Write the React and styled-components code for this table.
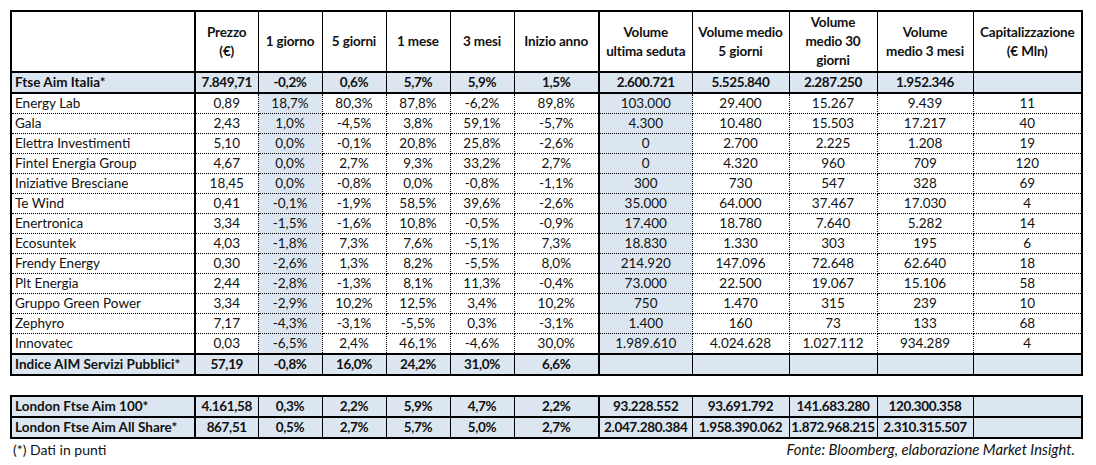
import React from "react";
import styled, { createGlobalStyle, css } from "styled-components";

const GlobalStyle = createGlobalStyle`
  html, body { margin: 0; padding: 0; background: #fff; }
  body { font-family: Lato, "Liberation Sans", sans-serif; color: #111; }
`;

const SHADE = "#dce6f1";
const WIDTHS = [184, 63, 64, 64, 64, 64, 85, 93, 97, 88, 96, 109];
const THICK_AFTER = [0, 6];

const Page = styled.div`
  padding: 10px 0 0 10px;
  width: 1072px;
  display: flex;
  flex-direction: column;
`;

const Table = styled.table`
  border-collapse: collapse;
  table-layout: fixed;
  width: 1072px;
  border: 2px solid #000;
  font-size: 13.5px;
  margin-bottom: ${(p) => p.$gap || 0}px;
`;

const cellBase = css`
  padding: 0 ${(p) => (p.$left ? 3 : 0)}px;
  white-space: nowrap;
  overflow: visible;
  text-align: ${(p) => (p.$left ? "left" : "center")};
  background: ${(p) => (p.$shade ? SHADE : "#fff")};
  border-right: ${(p) => (p.$thickRight ? "2px solid #000" : p.$dotted ? "1px dotted #000" : "1px solid #000")};
`;

const Th = styled.th`
  ${cellBase};
  height: 59px;
  font-weight: 700;
  line-height: 19px;
  letter-spacing: -0.15px;
  border-bottom: 2px solid #000;
  vertical-align: middle;
`;

const Td = styled.td`
  ${cellBase};
  height: 19px;
  line-height: 19px;
  font-weight: ${(p) => (p.$bold ? 700 : 400)};
  letter-spacing: ${(p) => (p.$bold && !p.$left ? "-0.35px" : "0")};
  border-top: ${(p) => (p.$bold ? "2px solid #000" : "1px dotted #000")};
  border-bottom: ${(p) => (p.$bold ? "2px solid #000" : "1px dotted #000")};
`;

const Footer = styled.div`
  display: flex;
  justify-content: space-between;
  align-items: baseline;
  font-size: 14px;
  line-height: 20px;
  padding: 0 7px 0 3px;
`;

const Source = styled.span`
  font-style: italic;
  font-size: 14.8px;
`;

const HEADERS = [
  [""],
  ["Prezzo", "(€)"],
  ["1 giorno"],
  ["5 giorni"],
  ["1 mese"],
  ["3 mesi"],
  ["Inizio anno"],
  ["Volume", "ultima seduta"],
  ["Volume medio", "5 giorni"],
  ["Volume", "medio 30", "giorni"],
  ["Volume", "medio 3 mesi"],
  ["Capitalizzazione", "(€ Mln)"],
];

const FTSE = ["Ftse Aim Italia*", "7.849,71", "-0,2%", "0,6%", "5,7%", "5,9%", "1,5%", "2.600.721", "5.525.840", "2.287.250", "1.952.346", ""];

const ROWS = [
  ["Energy Lab", "0,89", "18,7%", "80,3%", "87,8%", "-6,2%", "89,8%", "103.000", "29.400", "15.267", "9.439", "11"],
  ["Gala", "2,43", "1,0%", "-4,5%", "3,8%", "59,1%", "-5,7%", "4.300", "10.480", "15.503", "17.217", "40"],
  ["Elettra Investimenti", "5,10", "0,0%", "-0,1%", "20,8%", "25,8%", "-2,6%", "0", "2.700", "2.225", "1.208", "19"],
  ["Fintel Energia Group", "4,67", "0,0%", "2,7%", "9,3%", "33,2%", "2,7%", "0", "4.320", "960", "709", "120"],
  ["Iniziative Bresciane", "18,45", "0,0%", "-0,8%", "0,0%", "-0,8%", "-1,1%", "300", "730", "547", "328", "69"],
  ["Te Wind", "0,41", "-0,1%", "-1,9%", "58,5%", "39,6%", "-2,6%", "35.000", "64.000", "37.467", "17.030", "4"],
  ["Enertronica", "3,34", "-1,5%", "-1,6%", "10,8%", "-0,5%", "-0,9%", "17.400", "18.780", "7.640", "5.282", "14"],
  ["Ecosuntek", "4,03", "-1,8%", "7,3%", "7,6%", "-5,1%", "7,3%", "18.830", "1.330", "303", "195", "6"],
  ["Frendy Energy", "0,30", "-2,6%", "1,3%", "8,2%", "-5,5%", "8,0%", "214.920", "147.096", "72.648", "62.640", "18"],
  ["Plt Energia", "2,44", "-2,8%", "-1,3%", "8,1%", "11,3%", "-0,4%", "73.000", "22.500", "19.067", "15.106", "58"],
  ["Gruppo Green Power", "3,34", "-2,9%", "10,2%", "12,5%", "3,4%", "10,2%", "750", "1.470", "315", "239", "10"],
  ["Zephyro", "7,17", "-4,3%", "-3,1%", "-5,5%", "0,3%", "-3,1%", "1.400", "160", "73", "133", "68"],
  ["Innovatec", "0,03", "-6,5%", "2,4%", "46,1%", "-4,6%", "30,0%", "1.989.610", "4.024.628", "1.027.112", "934.289", "4"],
];

const INDICE = ["Indice AIM Servizi Pubblici*", "57,19", "-0,8%", "16,0%", "24,2%", "31,0%", "6,6%", "", "", "", "", ""];

const LONDON = [
  ["London Ftse Aim 100*", "4.161,58", "0,3%", "2,2%", "5,9%", "4,7%", "2,2%", "93.228.552", "93.691.792", "141.683.280", "120.300.358", ""],
  ["London Ftse Aim All Share*", "867,51", "0,5%", "2,7%", "5,7%", "5,0%", "2,7%", "2.047.280.384", "1.958.390.062", "1.872.968.215", "2.310.315.507", ""],
];

const Cols = () => (
  <colgroup>
    {WIDTHS.map((w, i) => (
      <col key={i} style={{ width: w }} />
    ))}
  </colgroup>
);

const BoldRow = ({ cells }) => (
  <tr>
    {cells.map((c, i) => (
      <Td key={i} $bold $shade $left={i === 0} $thickRight={THICK_AFTER.includes(i)}>
        {c}
      </Td>
    ))}
  </tr>
);

const DataRow = ({ cells }) => (
  <tr>
    {cells.map((c, i) => (
      <Td
        key={i}
        $dotted
        $left={i === 0}
        $shade={i === 2 || i === 7}
        $thickRight={THICK_AFTER.includes(i)}
      >
        {c}
      </Td>
    ))}
  </tr>
);

export default function App() {
  return (
    <>
      <GlobalStyle />
      <Page>
        <Table $gap={19}>
          <Cols />
          <thead>
            <tr>
              {HEADERS.map((lines, i) => (
                <Th key={i} $thickRight={THICK_AFTER.includes(i)}>
                  {lines.map((l, j) => (
                    <React.Fragment key={j}>
                      {j > 0 && <br />}
                      {l}
                    </React.Fragment>
                  ))}
                </Th>
              ))}
            </tr>
          </thead>
          <tbody>
            <BoldRow cells={FTSE} />
            {ROWS.map((r) => (
              <DataRow key={r[0]} cells={r} />
            ))}
            <BoldRow cells={INDICE} />
          </tbody>
        </Table>
        <Table>
          <Cols />
          <tbody>
            {LONDON.map((r) => (
              <BoldRow key={r[0]} cells={r} />
            ))}
          </tbody>
        </Table>
        <Footer>
          <span>(*) Dati in punti</span>
          <Source>Fonte: Bloomberg, elaborazione Market Insight.</Source>
        </Footer>
      </Page>
    </>
  );
}
